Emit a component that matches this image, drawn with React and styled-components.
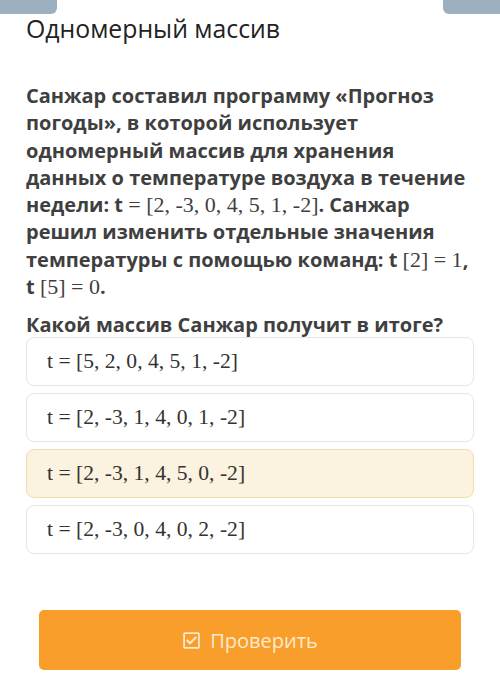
import React from "react";
import styled, { createGlobalStyle } from "styled-components";
import { FaRegCheckSquare } from "react-icons/fa";

const GlobalStyle = createGlobalStyle`
  body {
    margin: 0;
    background: #fff;
    font-family: "Open Sans", "Liberation Sans", sans-serif;
  }
`;

const Page = styled.div`
  width: 500px;
  height: 698px;
  overflow: hidden;
  background: #fff;
`;

const TopBar = styled.div`
  display: flex;
  justify-content: space-between;
  height: 14px;
`;

const Tab = styled.div`
  width: 57px;
  height: 100%;
  background: #9db0bf;
  border-radius: ${(p) => (p.$right ? "0 0 0 6px" : "0 0 6px 0")};
`;

const Content = styled.div`
  padding: 0 26px;
`;

const Title = styled.h1`
  margin: 0;
  font-size: 24.8px;
  font-weight: 400;
  color: #222;
  line-height: 28px;
`;

const Question = styled.p`
  margin: 40px 0 0;
  font-size: 20px;
  font-weight: 700;
  line-height: 27.3px;
  color: #3f3f3f;
  white-space: nowrap;
`;

const Ask = styled.p`
  margin: 13px 0 0;
  font-size: 20px;
  font-weight: 700;
  line-height: 24px;
  color: #3f3f3f;
`;

const Math = styled.span`
  font-family: "Liberation Serif", "DejaVu Serif", serif;
  font-weight: 400;
  font-size: 22px;
`;

const Options = styled.div`
  display: flex;
  flex-direction: column;
  gap: 7px;
`;

const Option = styled.div`
  display: flex;
  align-items: center;
  height: 49px;
  box-sizing: border-box;
  padding-left: 20px;
  border: 1px solid ${(p) => (p.$selected ? "#f1dcab" : "#e6e6e6")};
  border-radius: 8px;
  background: ${(p) => (p.$selected ? "#fbf2df" : "#fff")};
  font-family: "Liberation Serif", "DejaVu Serif", serif;
  font-size: 21.6px;
  color: #333;
`;

const ButtonRow = styled.div`
  padding: 56px 13px 0;
`;

const CheckButton = styled.button`
  width: 100%;
  height: 60px;
  display: flex;
  align-items: center;
  justify-content: center;
  gap: 9px;
  border: none;
  border-radius: 5px;
  background: #f99d2b;
  color: #fcebcc;
  font-family: "Open Sans", "Liberation Sans", sans-serif;
  font-size: 20px;
  font-weight: 400;
  svg {
    width: 19px;
    height: 19px;
  }
`;

const options = [
  "t = [5, 2, 0, 4, 5, 1, -2]",
  "t = [2, -3, 1, 4, 0, 1, -2]",
  "t = [2, -3, 1, 4, 5, 0, -2]",
  "t = [2, -3, 0, 4, 0, 2, -2]",
];

export default function App() {
  return (
    <Page>
      <GlobalStyle />
      <TopBar>
        <Tab />
        <Tab $right />
      </TopBar>
      <Content>
        <Title>Одномерный массив</Title>
        <Question>
          Санжар составил программу «Прогноз
          <br />
          погоды», в которой использует
          <br />
          одномерный массив для хранения
          <br />
          данных о температуре воздуха в течение
          <br />
          недели: t <Math>= [2, -3, 0, 4, 5, 1, -2]</Math>. Санжар
          <br />
          решил изменить отдельные значения
          <br />
          температуры с помощью команд: t <Math>[2] = 1</Math>,
          <br />
          t <Math>[5] = 0</Math>.
        </Question>
        <Ask>Какой массив Санжар получит в итоге?</Ask>
        <Options>
          {options.map((o, i) => (
            <Option key={o} $selected={i === 2}>
              {o}
            </Option>
          ))}
        </Options>
        <ButtonRow>
          <CheckButton>
            <FaRegCheckSquare />
            Проверить
          </CheckButton>
        </ButtonRow>
      </Content>
    </Page>
  );
}
